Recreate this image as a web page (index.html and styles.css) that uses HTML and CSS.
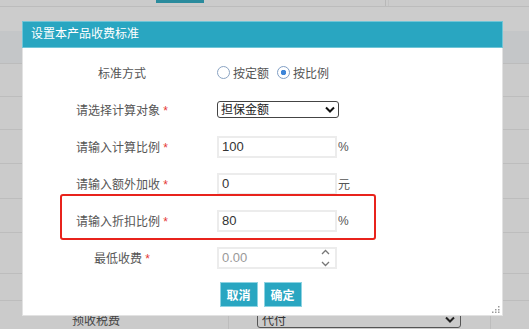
FILE: index.html
```html
<!DOCTYPE html>
<html lang="zh-CN">
<head>
    <meta charset="UTF-8">
    <title>设置本产品收费标准</title>
    <link rel="stylesheet" href="styles.css">
</head>
<body>
    <div class="page">
        <div class="topbar">
            <span class="tab"></span>
            <span class="divider"></span>
        </div>
        <div class="toolbar"></div>
        <div class="thead"></div>
        <div class="trow h33"><div class="cell c1"></div><div class="cell c2"></div><div class="cell"></div></div>
        <div class="trow h33"><div class="cell c1"></div><div class="cell c2"></div><div class="cell"></div></div>
        <div class="trow h34"><div class="cell c1"></div><div class="cell c2"></div><div class="cell"></div></div>
        <div class="trow h35"><div class="cell c1"></div><div class="cell c2"></div><div class="cell"></div></div>
        <div class="trow h34"><div class="cell c1"></div><div class="cell c2"></div><div class="cell"></div></div>
        <div class="trow h41"><div class="cell c1"></div><div class="cell c2"></div><div class="cell"></div></div>
        <div class="trow h27"><div class="cell c1"></div><div class="cell c2"></div><div class="cell"></div></div>
        <div class="trow h37">
            <div class="cell c1 page-label">预收税费</div>
            <div class="cell c2">
                <div class="page-select">
                    <span>代付</span>
                    <svg width="10" height="7" viewBox="0 0 10 7"><path d="M1 1.5 L5 5.5 L9 1.5" fill="none" stroke="#222" stroke-width="2"/></svg>
                </div>
            </div>
            <div class="cell"></div>
        </div>
    </div>

    <div class="dialog">
        <div class="dialog-title">设置本产品收费标准</div>
        <div class="dialog-body">
            <div class="form-row">
                <div class="form-label">标准方式</div>
                <div class="field">
                    <label class="radio"><input type="radio" name="mode"> 按定额</label>
                    <label class="radio"><input type="radio" name="mode" checked> 按比例</label>
                </div>
            </div>
            <div class="form-row">
                <div class="form-label">请选择计算对象 <span class="req">*</span></div>
                <div class="field">
                    <div class="select-wrap">
                        <select class="select">
                            <option>担保金额</option>
                        </select>
                        <svg class="select-arrow" width="10" height="7" viewBox="0 0 10 7"><path d="M1 1.5 L5 5.5 L9 1.5" fill="none" stroke="#111" stroke-width="2"/></svg>
                    </div>
                </div>
            </div>
            <div class="form-row">
                <div class="form-label">请输入计算比例 <span class="req">*</span></div>
                <div class="field">
                    <input class="text-input" type="text" value="100">
                    <span class="unit">%</span>
                </div>
            </div>
            <div class="form-row">
                <div class="form-label">请输入额外加收 <span class="req">*</span></div>
                <div class="field">
                    <input class="text-input" type="text" value="0">
                    <span class="unit">元</span>
                </div>
            </div>
            <div class="form-row">
                <div class="form-label">请输入折扣比例 <span class="req">*</span></div>
                <div class="field">
                    <input class="text-input" type="text" value="80">
                    <span class="unit">%</span>
                </div>
            </div>
            <div class="form-row">
                <div class="form-label">最低收费 <span class="req">*</span></div>
                <div class="field">
                    <div class="number-wrap">
                        <input class="text-input" type="text" placeholder="0.00">
                        <svg class="spinner" width="9" height="18" viewBox="0 0 9 18"><path d="M1 5 L4.5 1.5 L8 5 M1 13 L4.5 16.5 L8 13" fill="none" stroke="#777" stroke-width="1.3"/></svg>
                    </div>
                </div>
            </div>

            <div class="actions">
                <button class="btn">取消</button>
                <button class="btn">确定</button>
            </div>

            <div class="highlight"></div>
        </div>
        <svg class="grip" width="8" height="7" viewBox="0 0 8 7">
            <rect x="6" y="0" width="1.5" height="1.5" fill="#999"/>
            <rect x="3" y="3" width="1.5" height="1.5" fill="#999"/>
            <rect x="6" y="3" width="1.5" height="1.5" fill="#999"/>
            <rect x="0" y="5.5" width="1.5" height="1.5" fill="#999"/>
            <rect x="3" y="5.5" width="1.5" height="1.5" fill="#999"/>
            <rect x="6" y="5.5" width="1.5" height="1.5" fill="#999"/>
        </svg>
    </div>
</body>
</html>
```

FILE: styles.css
```css
body {
    margin: 0;
    height: 329px;
    overflow: hidden;
    font-family: "Liberation Sans", "Noto Sans CJK SC", sans-serif;
    background-color: #cbcbcb;
    color: #333;
}

/* dimmed page behind the dialog */
.page {
    position: relative;
}

.topbar {
    height: 6px;
    border-bottom: 1px solid #bcbcbc;
    position: relative;
}

.tab {
    display: block;
    margin-left: 156px;
    width: 48px;
    height: 3px;
    background-color: #2a8b9d;
}

.divider {
    position: absolute;
    left: 385px;
    top: 0;
    width: 1px;
    height: 6px;
    background-color: #b8b8b8;
    box-shadow: 3px 0 0 #c2c2c2;
}

.toolbar {
    height: 24px;
    background-color: #cccccc;
}

.thead {
    height: 32px;
    background-color: #c4c6c8;
    border-bottom: 1px solid #bcbcbc;
}

.trow {
    display: flex;
    box-sizing: border-box;
    border-bottom: 1px solid #bdbdbd;
}

.h27 { height: 27px; }
.h33 { height: 33px; }
.h34 { height: 34px; }
.h35 { height: 35px; }
.h37 { height: 37px; }
.h41 { height: 41px; }

.cell {
    display: flex;
    align-items: center;
}

.c1 {
    width: 229px;
    border-right: 1px solid #bdbdbd;
}

.c2 {
    width: 262px;
    border-right: 1px solid #bdbdbd;
    padding-left: 28px;
    box-sizing: border-box;
}

.page-label {
    padding-left: 72px;
    box-sizing: border-box;
    font-size: 12px;
    color: #444;
}

.page-select {
    width: 204px;
    height: 18px;
    box-sizing: border-box;
    border: 1px solid #555;
    border-radius: 3px;
    display: flex;
    align-items: center;
    justify-content: space-between;
    padding: 0 5px 0 4px;
    font-size: 12px;
    color: #333;
}

/* dialog */
.dialog {
    position: absolute;
    left: 22px;
    top: 21px;
    width: 481px;
    height: 295px;
    background-color: #fff;
    box-sizing: border-box;
    border: 1px solid #e2e2e2;
    border-top: none;
}

.dialog-title {
    height: 27px;
    margin: 0 -1px;
    box-sizing: border-box;
    background-color: #29a6c1;
    border: 1px solid #70c5d7;
    color: #fff;
    font-size: 12px;
    line-height: 25px;
    padding-left: 8px;
}

.dialog-body {
    position: relative;
    padding-top: 6px;
}

.form-row {
    display: grid;
    grid-template-columns: 194px 1fr;
    height: 37px;
    align-items: center;
}

.form-label {
    text-align: center;
    padding-left: 4px;
    font-size: 12px;
    color: #555;
}

.req {
    color: #e53935;
}

.field {
    display: flex;
    align-items: center;
    font-size: 12px;
    color: #555;
}

.radio {
    display: flex;
    align-items: center;
    margin-right: 8px;
}

.radio input {
    appearance: none;
    width: 13px;
    height: 13px;
    margin: 0 3px 0 0;
    border: 1px solid #8aa3c2;
    border-radius: 50%;
    box-sizing: border-box;
    background-color: #fff;
}

.radio input:checked {
    border-color: #7f9ec4;
    background: radial-gradient(circle, #3f86d8 0 2.5px, #fff 3px);
}

.select-wrap {
    position: relative;
}

.select {
    appearance: none;
    width: 122px;
    height: 17px;
    border: 1px solid #444;
    border-radius: 3px;
    background-color: #fff;
    font-family: inherit;
    font-size: 12px;
    color: #222;
    padding: 0 0 0 3px;
    outline: none;
}

.select-arrow {
    position: absolute;
    right: 4px;
    top: 5px;
    pointer-events: none;
}

.text-input {
    width: 120px;
    height: 22px;
    box-sizing: border-box;
    border: 2px solid #ececec;
    padding: 0 0 0 3px;
    font-family: inherit;
    font-size: 13px;
    color: #333;
    outline: none;
}

.text-input::placeholder {
    color: #999;
}

.unit {
    margin-left: 1px;
    font-size: 12px;
    color: #555;
}

.number-wrap {
    position: relative;
}

.spinner {
    position: absolute;
    right: 7px;
    top: 2px;
}

.actions {
    display: flex;
    justify-content: center;
    gap: 6px;
    padding-right: 4px;
    margin-top: 6px;
}

.btn {
    width: 38px;
    height: 25px;
    padding: 0;
    background-color: #29a6c1;
    border: 1px solid #8dd3e2;
    color: #fff;
    font-family: inherit;
    font-size: 12px;
    font-weight: bold;
}

/* annotation box */
.highlight {
    position: absolute;
    left: 37px;
    top: 146px;
    width: 316px;
    height: 46px;
    box-sizing: border-box;
    border: 2px solid #e8231c;
    border-radius: 3px;
}

.grip {
    position: absolute;
    right: 2px;
    bottom: 2px;
}
```
